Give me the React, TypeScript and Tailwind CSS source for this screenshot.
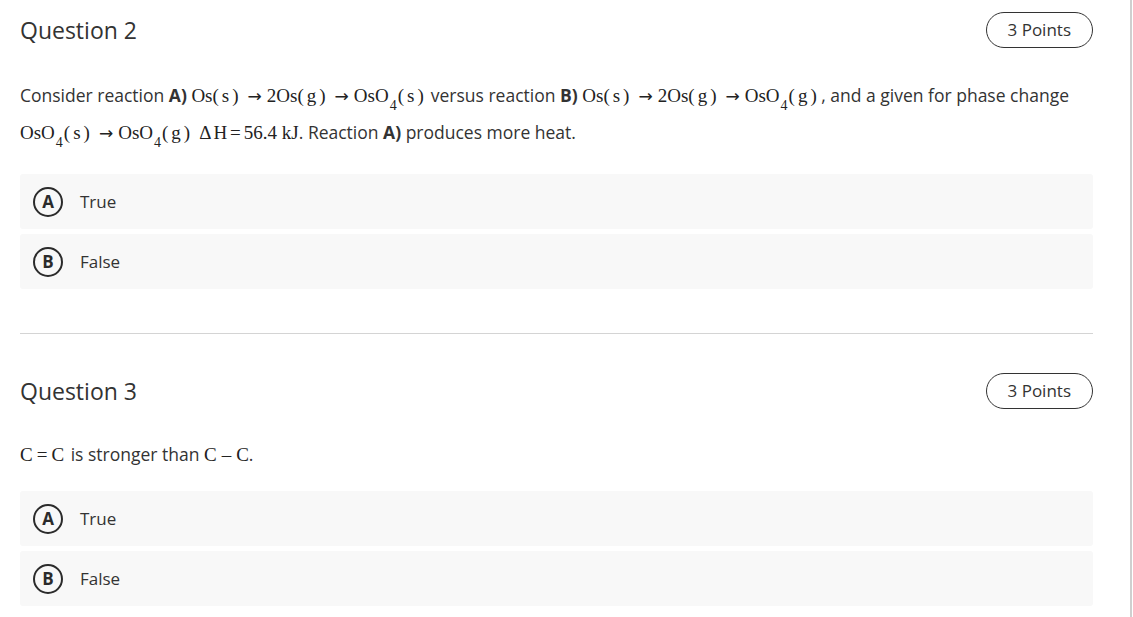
import React from 'react';

const M: React.FC<{ children: React.ReactNode }> = ({ children }) => (
  <span className="font-['Liberation_Serif',serif] text-[19px] leading-none text-[#222]">{children}</span>
);

const Sub: React.FC<{ children: React.ReactNode }> = ({ children }) => (
  <span className="relative top-[8px] text-[14px] mx-[1px]">{children}</span>
);

const Arrow = () => (
  <span className="ml-[9px] mr-[5px] font-['DejaVu_Sans',sans-serif] text-[17px]">→</span>
);

const P: React.FC<{ c: string }> = ({ c }) => (
  <>
    (<span className="mx-[3px]">{c}</span>)
  </>
);

const Option: React.FC<{ letter: string; label: string }> = ({ letter, label }) => (
  <div className="flex items-center h-[55px] bg-[#f8f8f8] rounded-[3px] pl-[13px] gap-[17px]">
    <div className="w-[30px] h-[30px] shrink-0 rounded-full border-2 border-[#2b2b2b] flex items-center justify-center text-[17px] font-bold text-[#2b2b2b]">
      {letter}
    </div>
    <span className="text-[17px] text-[#333]">{label}</span>
  </div>
);

const Header: React.FC<{ title: string }> = ({ title }) => (
  <div className="flex items-center justify-between">
    <h2 className="text-[23px] text-[#333]">{title}</h2>
    <span className="h-[36px] px-[21px] flex items-center rounded-full border border-[#333] text-[17px] text-[#333]">
      3 Points
    </span>
  </div>
);

export default function App() {
  return (
    <div className="w-[1133px] h-[617px] bg-white overflow-hidden font-['Open_Sans',sans-serif]">
      <div className="w-[1132px] h-full border-r-2 border-[#cfcfcf] pl-[20px] pr-[37px]">
        <section className="pt-[12px]">
          <Header title="Question 2" />
          <div className="mt-[29px] text-[17.5px] text-[#333] leading-[37px] whitespace-nowrap">
            <p>
              Consider reaction <b className="font-bold">A)</b>{' '}
              <M>
                Os<P c="s" />
                <Arrow />2Os<P c="g" />
                <Arrow />OsO<Sub>4</Sub>
                <P c="s" />
              </M>
              <span className="ml-[7px]">versus reaction</span> <b className="font-bold">B)</b>{' '}
              <M>
                Os<P c="s" />
                <Arrow />2Os<P c="g" />
                <Arrow />OsO<Sub>4</Sub>
                <P c="g" />
              </M>{' '}
              , and a given for phase change
            </p>
            <p>
              <M>
                OsO<Sub>4</Sub>
                <P c="s" />
                <Arrow />OsO<Sub>4</Sub>
                <P c="g" />
                <span className="ml-[9px]">Δ</span>
                <span className="ml-[2px]">H</span>
                <span className="mx-[3px]">=</span>56.4 kJ
              </M>
              . Reaction <b className="font-bold">A)</b> produces more heat.
            </p>
          </div>
          <div className="mt-[23px] flex flex-col gap-[5px]">
            <Option letter="A" label="True" />
            <Option letter="B" label="False" />
          </div>
        </section>

        <div className="mt-[44px] border-t border-[#d4d4d4]" />

        <section className="pt-[39px]">
          <Header title="Question 3" />
          <div className="mt-[27px] text-[17.5px] text-[#333] leading-[37px]">
            <p>
              <M>
                C<span className="mx-[4px]">=</span>C
              </M>{' '}
              <span className="ml-[2px]">is stronger than</span>{' '}
              <M>
                C<span className="mx-[5px]">–</span>C
              </M>
              .
            </p>
          </div>
          <div className="mt-[18px] flex flex-col gap-[5px]">
            <Option letter="A" label="True" />
            <Option letter="B" label="False" />
          </div>
        </section>
      </div>
    </div>
  );
}
